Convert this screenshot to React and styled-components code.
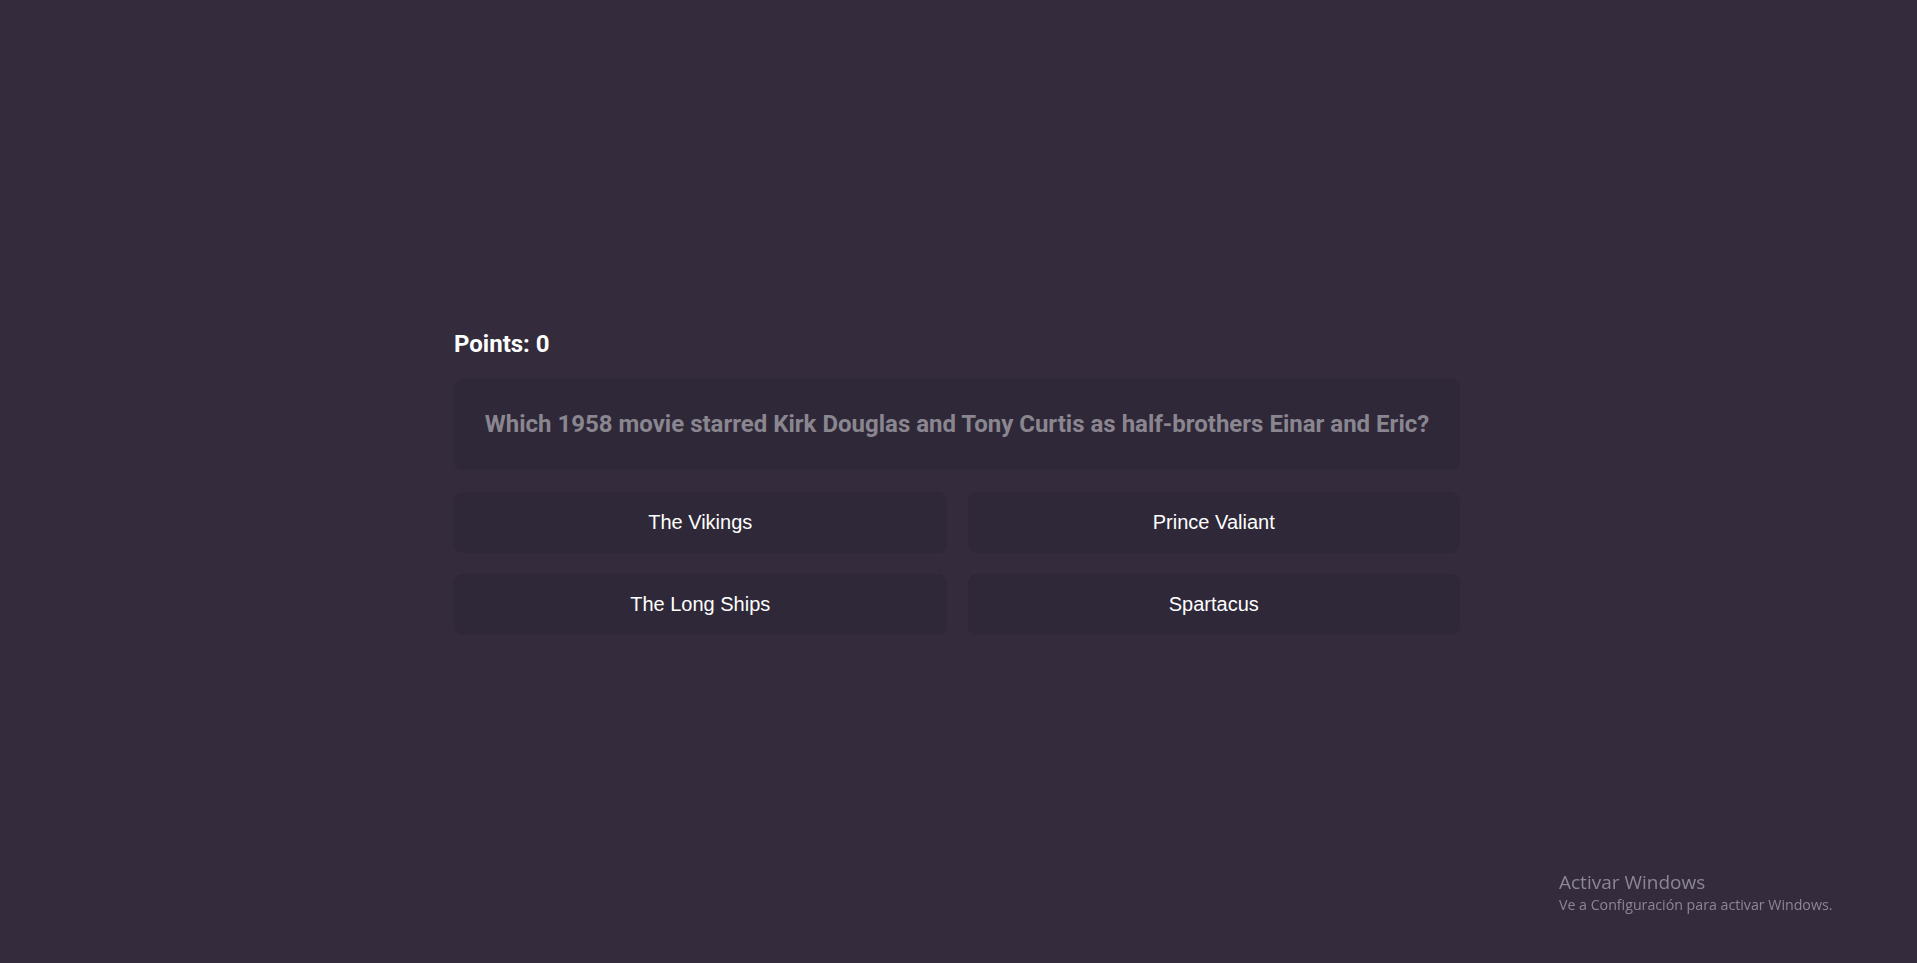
import React from "react";
import styled, { createGlobalStyle } from "styled-components";

const GlobalStyle = createGlobalStyle`
  html, body {
    margin: 0;
    padding: 0;
    background: #342b3d;
  }
  * { box-sizing: border-box; }
`;

const Page = styled.main`
  min-height: 100vh;
  display: flex;
  align-items: center;
  justify-content: center;
  background: #342b3d;
  font-family: Roboto, "Liberation Sans", sans-serif;
`;

const Quiz = styled.section`
  width: 1006px;
  margin-left: -3px;
  margin-top: 1px;
  display: flex;
  flex-direction: column;
`;

const Points = styled.h2`
  margin: 0 0 21px;
  color: #ffffff;
  font-family: Roboto, sans-serif;
  font-weight: 700;
  font-size: 24px;
  line-height: 28px;
`;

const QuestionBox = styled.div`
  height: 91px;
  border-radius: 9px;
  background: #2f2838;
  display: flex;
  align-items: center;
  justify-content: center;
  padding: 0 20px;
`;

const QuestionText = styled.h3`
  margin: 0;
  color: #8a8690;
  font-family: Roboto, sans-serif;
  font-weight: 700;
  font-size: 24px;
  text-align: center;
`;

const Answers = styled.div`
  margin-top: 22px;
  display: grid;
  grid-template-columns: 1fr 1fr;
  gap: 21px;
`;

const AnswerButton = styled.button`
  height: 61px;
  border: none;
  border-radius: 9px;
  background: #2f2838;
  color: #ffffff;
  font-family: "Liberation Sans", Arial, sans-serif;
  font-size: 20px;
  cursor: pointer;
  display: flex;
  align-items: center;
  justify-content: center;
  padding: 0;
`;

const Watermark = styled.div`
  position: fixed;
  left: 1559px;
  top: 870px;
  color: #8c8794;
  font-family: "Open Sans", "Noto Sans", sans-serif;
  pointer-events: none;
`;

const WatermarkTitle = styled.div`
  font-size: 19px;
  line-height: 25px;
`;

const WatermarkSub = styled.div`
  font-size: 14.2px;
  line-height: 19px;
`;

const answers = ["The Vikings", "Prince Valiant", "The Long Ships", "Spartacus"];

export default function App() {
  return (
    <>
      <GlobalStyle />
      <Page>
        <Quiz>
          <Points>Points: 0</Points>
          <QuestionBox>
            <QuestionText>
              Which 1958 movie starred Kirk Douglas and Tony Curtis as half-brothers Einar and Eric?
            </QuestionText>
          </QuestionBox>
          <Answers>
            {answers.map((a) => (
              <AnswerButton key={a}>{a}</AnswerButton>
            ))}
          </Answers>
        </Quiz>
      </Page>
      <Watermark>
        <WatermarkTitle>Activar Windows</WatermarkTitle>
        <WatermarkSub>Ve a Configuración para activar Windows.</WatermarkSub>
      </Watermark>
    </>
  );
}
